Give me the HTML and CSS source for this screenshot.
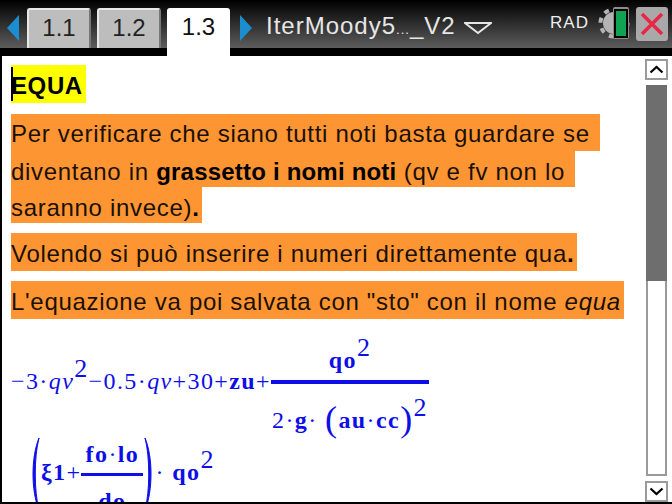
FILE: index.html

```html
<!DOCTYPE html>
<html lang="it">
<head>
  <meta charset="UTF-8" />
  <title>IterMoody5_V2</title>
  <link rel="stylesheet" href="styles.css">
</head>
<body>
  <div class="screen">
    <header class="topbar">
      <svg class="arrow arrow-left" width="14" height="28" viewBox="0 0 14 28"><path d="M13 1V27L1 14Z" fill="#1c8ed0"/></svg>
      <div class="tab">1.1</div>
      <div class="tab">1.2</div>
      <div class="tab active">1.3</div>
      <svg class="arrow arrow-right" width="14" height="28" viewBox="0 0 14 28"><path d="M1 1V27L13 14Z" fill="#1c8ed0"/></svg>
      <div class="title">IterMoody5<small>...</small>_V2</div>
      <svg class="doc-menu" width="28" height="14" viewBox="0 0 28 14"><path d="M1 2H27L14 12Z" fill="none" stroke="#e6e6e6" stroke-width="2"/></svg>
      <div class="mode">RAD</div>
      <svg class="battery" width="32" height="34" viewBox="0 0 32 34">
        <circle cx="16" cy="17" r="11" fill="#b4b4b4"/>
        <circle cx="16" cy="17" r="13.500" fill="none" stroke="#b4b4b4" stroke-width="4" stroke-dasharray="5 5.600"/>
        <rect x="15" y="1" width="16" height="32" rx="2" fill="#8c8c8c"/>
        <rect x="16" y="3" width="14" height="29" fill="#000"/>
        <rect x="18" y="5" width="10" height="25" fill="#10a452"/>
      </svg>
      <svg class="close" width="32" height="34" viewBox="0 0 32 34">
        <rect width="32" height="34" rx="3" fill="#a9a9a9"/>
        <path d="M6 7L26 27M26 7L6 27" stroke="#e8264a" stroke-width="3.500"/>
      </svg>
    </header>

    <main class="page">
      <div class="content">
        <div class="block top">
          <span class="line heading"><i class="cursor"></i>EQUA</span>
        </div>
        <div class="block">
          <span class="line">Per verificare che siano tutti noti basta guardare se&nbsp;</span>
          <span class="line">diventano in <b>grassetto i nomi noti</b> (qv e fv non lo&nbsp;</span>
          <span class="line">saranno invece)<b>.</b></span>
        </div>
        <div class="block">
          <span class="line">Volendo si può inserire i numeri direttamente qua<b>.</b></span>
        </div>
        <div class="block">
          <span class="line">L'equazione va poi salvata con "sto" con il nome <em>equa</em></span>
        </div>

        <div class="math">
          <div class="math-row first">
            <span class="term">−3·<i>qv</i><sup>2</sup>−0.5·<i>qv</i>+30+<b>zu</b>+</span>
            <span class="frac">
              <span class="num"><b>qo</b><sup>2</sup></span>
              <span class="den">2·<b>g</b>· <span class="paren">(</span><b>au</b>·<b>cc</b><span class="paren">)</span><sup>2</sup></span>
            </span>
          </div>
          <div class="math-row second">
            <svg class="big-paren" width="10" height="74" viewBox="0 0 10 74"><path d="M9 1C1 20 1 54 9 73C4 54 4 20 9 1Z" fill="#0e0ee8" stroke="#0e0ee8"/></svg>
            <span class="term"><b>ξ1</b>+</span>
            <span class="frac small">
              <span class="num"><b>fo</b>·<b>lo</b></span>
              <span class="den"><b>do</b></span>
            </span>
            <svg class="big-paren" width="10" height="74" viewBox="0 0 10 74"><path d="M1 1C9 20 9 54 1 73C6 54 6 20 1 1Z" fill="#0e0ee8" stroke="#0e0ee8"/></svg>
            <span class="term">· <b>qo</b><sup>2</sup></span>
          </div>
        </div>
      </div>

      <div class="scrollbar">
        <div class="scroll-btn"><svg width="15" height="9" viewBox="0 0 15 9"><path d="M1.500 7.500L7.500 2L13.500 7.500" fill="none" stroke="#000" stroke-width="2.200"/></svg></div>
        <div class="track"><div class="thumb"></div></div>
        <div class="scroll-btn"><svg width="15" height="9" viewBox="0 0 15 9"><path d="M1.500 1.500L7.500 7L13.500 1.500" fill="none" stroke="#000" stroke-width="2.200"/></svg></div>
      </div>
    </main>
  </div>
</body>
</html>
```

FILE: styles.css

```css
html, body {
  margin: 0;
  padding: 0;
  background: #000;
}

.screen {
  width: 672px;
  height: 504px;
  display: flex;
  flex-direction: column;
  overflow: hidden;
  font-family: "Liberation Sans", sans-serif;
}

.topbar {
  height: 56px;
  flex: none;
  display: flex;
  align-items: flex-start;
  background: linear-gradient(to bottom, #000 0, #5c5c5c 48px, #000 48px);
}

.arrow {
  margin-top: 14px;
}

.arrow-left {
  margin-left: 6px;
  margin-right: 7px;
}

.arrow-right {
  margin-left: 9px;
}

.tab {
  width: 60px;
  height: 38px;
  margin: 8px 6px 0 0;
  border: 2px solid #e8e8e8;
  border-right-color: #777;
  border-bottom: 0;
  border-radius: 3px 3px 0 0;
  background: #bdbdbd;
  color: #222;
  font-size: 24px;
  line-height: 36px;
  text-align: center;
}

.tab.active {
  width: 63px;
  height: 48px;
  border: 0;
  margin-right: 0;
  background: #fff;
  color: #111;
  line-height: 38px;
}

.title {
  margin: 9px 0 0 13px;
  color: #e6e6e6;
  font-size: 24px;
  line-height: 34px;
  letter-spacing: 1px;
}

.title small {
  font-size: 13px;
}

.doc-menu {
  margin: 21px 0 0 8px;
}

.mode {
  margin: 12px 0 0 auto;
  color: #eee;
  font-size: 17px;
  line-height: 22px;
  letter-spacing: 1px;
}

.battery {
  margin: 6px 0 0 9px;
}

.close {
  margin: 7px 4px 0 6px;
}

.page {
  flex: 1;
  min-height: 0;
  display: flex;
  margin: 0 0 2px 2px;
  background: #fff;
}

.content {
  flex: 1;
  min-width: 0;
  overflow: hidden;
  padding: 9px 0 0 9px;
}

.block {
  margin-bottom: 10px;
}

.block.top {
  margin-bottom: 11px;
}

.line {
  display: block;
  width: fit-content;
  height: 36px;
  padding-right: 3px;
  background: #fe9533;
  color: #1a1005;
  font-size: 24px;
  line-height: 41px;
  letter-spacing: 0.7px;
  white-space: nowrap;
}

.line:first-child {
  height: 37px;
  line-height: 40px;
}

.line:only-child {
  height: 38px;
  line-height: 41px;
}

.line b {
  color: #000;
  letter-spacing: 0.2px;
}

.heading {
  position: relative;
  background: #ff0;
  font-weight: bold;
  color: #000;
  letter-spacing: 0.6px;
}

.cursor {
  position: absolute;
  left: 0;
  top: 2px;
  width: 2px;
  height: 34px;
  background: #000;
}

.math {
  padding-top: 7px;
  color: #0e0ee8;
  font-family: "Liberation Serif", serif;
  font-size: 24px;
  letter-spacing: 1.4px;
}

.math sup {
  font-size: 26px;
  line-height: 0;
  vertical-align: 12px;
}

.math-row {
  display: flex;
  align-items: center;
  white-space: nowrap;
}

.math-row.first {
  height: 100px;
}

.math-row.second {
  height: 76px;
  padding-left: 18px;
}

.term {
  padding-bottom: 10px;
}

.second .term {
  padding-bottom: 4px;
}

.frac {
  display: inline-flex;
  flex-direction: column;
  align-items: center;
  width: 158px;
}

.frac .num {
  box-sizing: border-box;
  height: 44px;
  border-bottom: 4px solid #0e0ee8;
  width: 100%;
  line-height: 40px;
  text-align: center;
}

.frac .den {
  height: 48px;
  line-height: 72px;
}

.frac.small {
  width: 62px;
}

.frac.small .num {
  height: 33px;
  border-bottom-width: 3px;
  line-height: 23px;
}

.frac.small .den {
  height: 30px;
  line-height: 51px;
}

.paren {
  font-size: 36px;
  line-height: 0;
  vertical-align: -3px;
}

.big-paren {
  flex: none;
  margin: 0 1px;
}

.scrollbar {
  width: 27px;
  flex: none;
  display: flex;
  flex-direction: column;
  align-items: flex-start;
  gap: 5px;
  padding-top: 3px;
}

.scroll-btn {
  width: 23px;
  height: 21px;
  flex: none;
  box-sizing: border-box;
  border: 2px solid #9a9a9a;
  display: flex;
  align-items: center;
  justify-content: center;
}

.track {
  width: 21px;
  flex: 1;
  box-sizing: border-box;
  margin-left: 1px;
  border: 2px solid #9a9a9a;
  border-top: 0;
  background: #fff;
}

.thumb {
  height: 196px;
  margin: 0 -2px;
  background: #6e6e6e;
}
```
